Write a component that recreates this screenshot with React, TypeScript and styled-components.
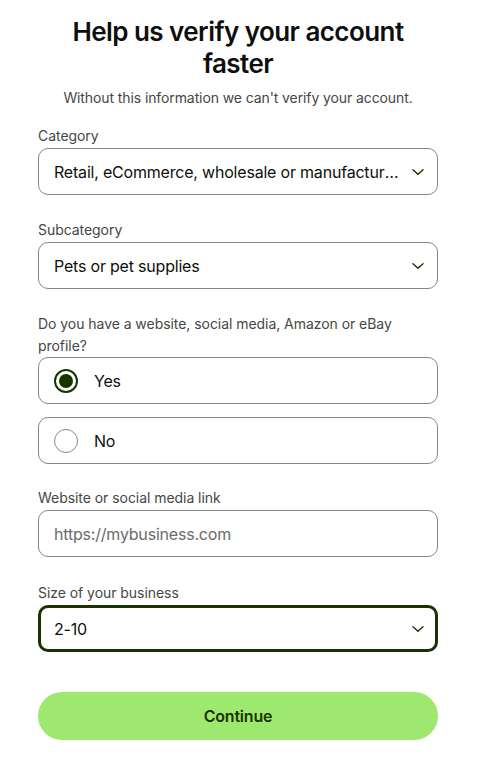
import React, { useState } from 'react'
import styled, { createGlobalStyle } from 'styled-components'

const GlobalStyle = createGlobalStyle`
  html, body {
    margin: 0;
    padding: 0;
    background: #ffffff;
  }
  body {
    font-family: Inter, 'Noto Sans', 'Liberation Sans', sans-serif;
    color: #0e0f0c;
  }
`

const Page = styled.div`
  width: 400px;
  padding: 16px 38px 28px;
`

const Title = styled.h1`
  margin: 0;
  font-size: 26px;
  line-height: 32px;
  font-weight: 600;
  text-align: center;
  letter-spacing: -0.55px;
  color: #0e0f0c;
`

const Subtitle = styled.p`
  margin: 8px 0 0;
  font-size: 14px;
  line-height: 20px;
  text-align: center;
  letter-spacing: -0.1px;
  color: #454745;
`

const Form = styled.div`
  display: flex;
  flex-direction: column;
  margin-top: 18px;
`

const Field = styled.div<{ gapAfter?: number }>`
  display: flex;
  flex-direction: column;
  margin-bottom: ${({ gapAfter }) => gapAfter ?? 25}px;
`

const Label = styled.div<{ tall?: boolean }>`
  font-size: 14px;
  line-height: ${({ tall }) => (tall ? 22 : 20)}px;
  letter-spacing: -0.05px;
  color: #454745;
  margin-bottom: ${({ tall }) => (tall ? 0 : 2)}px;
`

const Box = styled.div<{ focused?: boolean }>`
  box-sizing: border-box;
  height: 47px;
  display: flex;
  align-items: center;
  padding: ${({ focused }) => (focused ? '0 12px 0 13px' : '0 14px 0 15px')};
  border: ${({ focused }) => (focused ? '3px solid #163300' : '1px solid #868685')};
  border-radius: 10px;
  background: #fff;
`

const SelectText = styled.span`
  flex: 1;
  font-size: 16px;
  line-height: 24px;
  letter-spacing: -0.2px;
  color: #0e0f0c;
  white-space: nowrap;
  overflow: hidden;
  text-overflow: ellipsis;
`

const Placeholder = styled(SelectText)`
  color: #6a6c6a;
`

const Chevron = styled.svg`
  flex: 0 0 auto;
  margin-left: 12px;
  margin-right: -1px;
`

const RadioList = styled.div`
  display: flex;
  flex-direction: column;
  gap: 13px;
  margin-bottom: 24px;
`

const RadioRow = styled(Box)`
  gap: 16px;
  cursor: pointer;
`

const RadioDot = styled.span<{ checked?: boolean }>`
  box-sizing: border-box;
  width: 24px;
  height: 24px;
  border-radius: 50%;
  border: ${({ checked }) => (checked ? '2px solid #163300' : '1px solid #868685')};
  display: flex;
  align-items: center;
  justify-content: center;
  &::after {
    content: '';
    width: 14px;
    height: 14px;
    border-radius: 50%;
    background: #163300;
    display: ${({ checked }) => (checked ? 'block' : 'none')};
  }
`

const RadioText = styled.span`
  font-size: 16px;
  letter-spacing: -0.2px;
  color: #0e0f0c;
`

const Button = styled.button`
  margin-top: 40px;
  height: 48px;
  border: none;
  border-radius: 24px;
  background: #9fe870;
  color: #163300;
  font-family: inherit;
  font-size: 16px;
  font-weight: 600;
  letter-spacing: -0.2px;
  cursor: pointer;
`

function ChevronDown() {
  return (
    <Chevron width="12" height="12" viewBox="0 0 12 12" fill="none">
      <path d="M1 3.8 6 8.3 11 3.8" stroke="#163300" strokeWidth="1.4" strokeLinecap="round" strokeLinejoin="round" />
    </Chevron>
  )
}

export default function App() {
  const [hasProfile, setHasProfile] = useState(true)

  return (
    <>
      <GlobalStyle />
      <Page>
        <Title>Help us verify your account faster</Title>
        <Subtitle>Without this information we can't verify your account.</Subtitle>
        <Form>
          <Field>
            <Label>Category</Label>
            <Box>
              <SelectText>Retail, eCommerce, wholesale or manufacturing</SelectText>
              <ChevronDown />
            </Box>
          </Field>
          <Field gapAfter={24}>
            <Label>Subcategory</Label>
            <Box>
              <SelectText>Pets or pet supplies</SelectText>
              <ChevronDown />
            </Box>
          </Field>
          <Label tall>Do you have a website, social media, Amazon or eBay profile?</Label>
          <RadioList>
            <RadioRow onClick={() => setHasProfile(true)}>
              <RadioDot checked={hasProfile} />
              <RadioText>Yes</RadioText>
            </RadioRow>
            <RadioRow onClick={() => setHasProfile(false)}>
              <RadioDot checked={!hasProfile} />
              <RadioText>No</RadioText>
            </RadioRow>
          </RadioList>
          <Field gapAfter={26}>
            <Label>Website or social media link</Label>
            <Box>
              <Placeholder>https://mybusiness.com</Placeholder>
            </Box>
          </Field>
          <Field gapAfter={0}>
            <Label>Size of your business</Label>
            <Box focused>
              <SelectText>2-10</SelectText>
              <ChevronDown />
            </Box>
          </Field>
          <Button>Continue</Button>
        </Form>
      </Page>
    </>
  )
}
